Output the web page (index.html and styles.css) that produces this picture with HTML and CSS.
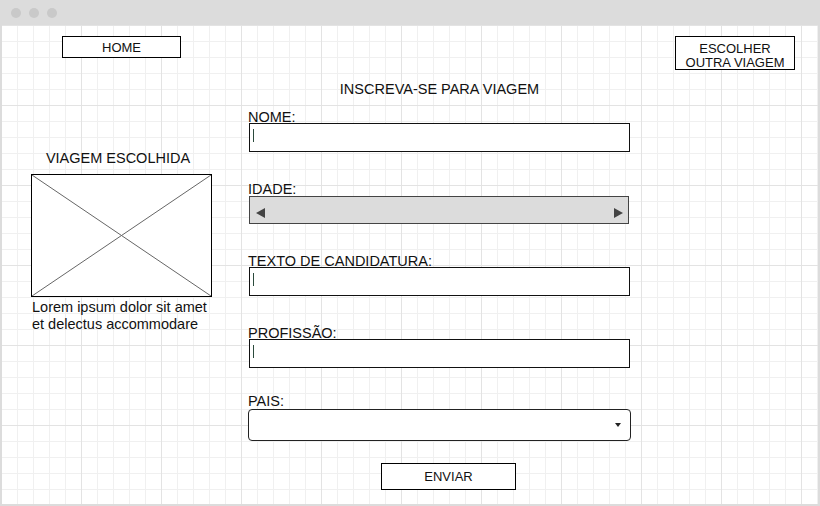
FILE: index.html
```html
<!DOCTYPE html>
<html lang="pt">
<head>
    <meta charset="UTF-8">
    <title>Inscreva-se para viagem</title>
    <link rel="stylesheet" href="styles.css">
</head>
<body>
<div class="window">
    <div class="titlebar">
        <span class="dot"></span>
        <span class="dot"></span>
        <span class="dot"></span>
    </div>
    <div class="canvas">
        <div class="top">
            <div class="btn btn-home">HOME</div>
            <div class="btn btn-other">ESCOLHER<br>OUTRA VIAGEM</div>
        </div>
        <div class="main">
            <div class="side">
                <div class="side-title">VIAGEM ESCOLHIDA</div>
                <div class="placeholder">
                    <svg width="179" height="121" viewBox="0 0 179 121">
                        <line x1="0" y1="0" x2="179" y2="121"/>
                        <line x1="179" y1="0" x2="0" y2="121"/>
                    </svg>
                </div>
                <p class="side-text">Lorem ipsum dolor sit amet<br>et delectus accommodare</p>
            </div>
            <div class="form">
                <div class="form-title">INSCREVA-SE PARA VIAGEM</div>
                <div class="field">
                    <div class="label">NOME:</div>
                    <div class="input"><span class="caret"></span></div>
                </div>
                <div class="field">
                    <div class="label">IDADE:</div>
                    <div class="range">
                        <svg width="10" height="10" viewBox="0 0 10 10"><polygon points="10,0 10,10 1,5"/></svg>
                        <svg width="10" height="10" viewBox="0 0 10 10"><polygon points="0,0 0,10 9,5"/></svg>
                    </div>
                </div>
                <div class="field">
                    <div class="label">TEXTO DE CANDIDATURA:</div>
                    <div class="input"><span class="caret"></span></div>
                </div>
                <div class="field">
                    <div class="label">PROFISSÃO:</div>
                    <div class="input"><span class="caret"></span></div>
                </div>
                <div class="field field-pais">
                    <div class="label">PAIS:</div>
                    <div class="select">
                        <svg width="6" height="4" viewBox="0 0 6 4"><polygon points="0,0 6,0 3,4"/></svg>
                    </div>
                </div>
                <div class="btn btn-send">ENVIAR</div>
            </div>
        </div>
    </div>
</div>
</body>
</html>
```
FILE: styles.css
```css
* {
    margin: 0;
    padding: 0;
    box-sizing: border-box;
}

body {
    font-family: "Liberation Sans", Arial, sans-serif;
    color: #111;
}

.window {
    width: 820px;
    height: 506px;
    border: 2px solid #dcdcdc;
    border-top: none;
    display: flex;
    flex-direction: column;
}

.titlebar {
    height: 25px;
    background: #dcdcdc;
    display: flex;
    align-items: center;
    gap: 8px;
    padding-left: 9px;
}

.dot {
    width: 10px;
    height: 10px;
    border-radius: 50%;
    background: #c9c9c9;
}

/* fundo quadriculado: linha fina a cada 16px, linha forte a cada 80px */
.canvas {
    flex: 1;
    background-color: #fff;
    background-image: linear-gradient(to right, #e3e3e3 1px, transparent 1px),
    linear-gradient(#e3e3e3 1px, transparent 1px),
    linear-gradient(to right, #f0f0f0 1px, transparent 1px),
    linear-gradient(#f0f0f0 1px, transparent 1px);
    background-size: 80px 80px, 80px 80px, 16px 16px, 16px 16px;
    background-position: -1px 0;
}

.top {
    display: flex;
    justify-content: space-between;
    align-items: flex-start;
    padding: 11px 23px 0 60px;
}

.btn {
    border: 1px solid #000;
    background: #fff;
    font-size: 13px;
    text-align: center;
}

.btn-home {
    width: 119px;
    height: 22px;
    padding-top: 1px;
    line-height: 19px;
}

.btn-other {
    width: 120px;
    height: 34px;
    padding-top: 5px;
    line-height: 13.5px;
}

.main {
    display: flex;
    padding-left: 29px;
}

.side {
    width: 181px;
    padding-top: 80px;
    font-size: 14.5px;
}

.side-title {
    line-height: 16px;
    text-align: center;
    padding-right: 7px;
}

.placeholder {
    margin-top: 8px;
    width: 181px;
    height: 123px;
    border: 1px solid #000;
    background: #fff;
}

.placeholder svg {
    display: block;
}

.placeholder line {
    stroke: #666;
    stroke-width: 1;
}

.side-text {
    margin-top: 2px;
    line-height: 16.5px;
    padding-left: 1px;
}

.form {
    width: 383px;
    margin-left: 36px;
    font-size: 14.5px;
}

.form-title {
    margin-top: 11px;
    line-height: 16px;
    text-align: center;
}

.field {
    margin-top: 31px;
}

.form-title + .field {
    margin-top: 14px;
}

.field-pais {
    margin-top: 27px;
}

.label {
    line-height: 12px;
    height: 12px;
}

.input {
    margin-left: 1px;
    width: 381px;
    height: 29px;
    border: 1px solid #111;
    background: #fff;
    padding: 5px 0 0 3px;
}

.caret {
    display: block;
    width: 1px;
    height: 13px;
    background: #2b4a3c;
}

.range {
    margin: 1px 0 0 1px;
    width: 380px;
    height: 28px;
    border: 1px solid #444;
    background: #dcdcdc;
    display: flex;
    justify-content: space-between;
    padding: 11px 4px 0 5px;
}

.range svg {
    fill: #444;
}

.select {
    margin-top: 2px;
    width: 383px;
    height: 32px;
    border: 1px solid #222;
    border-radius: 4px;
    background: #fff;
    display: flex;
    justify-content: flex-end;
    align-items: center;
    padding-right: 9px;
}

.select svg {
    fill: #222;
}

.btn-send {
    margin: 22px 0 0 133px;
    width: 135px;
    height: 27px;
    line-height: 25px;
}
```
